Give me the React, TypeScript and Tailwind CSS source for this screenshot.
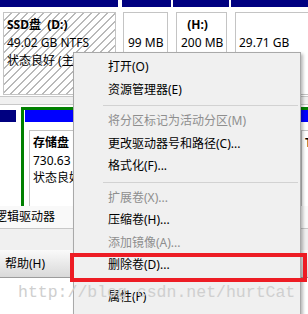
const menuItems: (string | { label: string; off?: boolean })[] = [
  { label: "打开(O)" },
  { label: "资源管理器(E)" },
  "sep",
  { label: "将分区标记为活动分区(M)", off: true },
  { label: "更改驱动器号和路径(C)..." },
  { label: "格式化(F)..." },
  "sep",
  { label: "扩展卷(X)...", off: true },
  { label: "压缩卷(H)..." },
  { label: "添加镜像(A)...", off: true },
  { label: "删除卷(D)..." },
  "sep",
  { label: "属性(P)" },
];

const ContextMenu = () => (
  <div className="absolute left-[73px] top-[52px] w-[228px] h-[280px] bg-[#f0f0f0] border border-[#a9a9a9] shadow-[2px_2px_3px_rgba(0,0,0,0.28)] pt-[3px]">
    {menuItems.map((item, i) =>
      item === "sep" ? (
        <div key={i} className="h-[9px] flex items-center pl-[29px] pr-[2px]">
          <div className="h-px w-full bg-[#d2d2d2]" />
        </div>
      ) : (
        <div
          key={i}
          className={`h-[22.5px] flex items-center pl-[34px] text-[12px] whitespace-nowrap ${
            item.off ? "text-[#8e8e8e]" : "text-black"
          }`}
        >
          {item.label}
        </div>
      )
    )}
  </div>
);

const Part = ({ lines, bold, className }: { lines: string[]; bold?: string; className?: string }) => (
  <div className={`h-[83px] border border-[#c4c4c4] pt-[3px] overflow-hidden leading-[18px] text-[12px] whitespace-pre ${className ?? ""}`}>
    <div className="font-bold h-[18px]">{bold}</div>
    {lines.map((l, i) => (
      <div key={i}>{l}</div>
    ))}
  </div>
);

export default function App() {
  return (
    <div className="relative w-[308px] h-[314px] overflow-hidden bg-white text-black font-['Noto_Sans','Noto_Sans_CJK_SC',sans-serif]">
      {/* disk 0 */}
      <div className="flex h-[96px] bg-white">
        <div className="w-[118px] shrink-0">
          <div className="h-[7px] bg-[#000080]" />
          <div className="pt-[5px] pl-[3px] pr-[2px]">
            <Part
              bold="SSD盘  (D:)"
              lines={["49.02 GB NTFS", "状态良好 (主分区)"]}
              className="pl-[3px] bg-[repeating-linear-gradient(135deg,#ffffff_0px,#ffffff_4.6px,#b9b9b9_4.6px,#b9b9b9_5.66px)]"
            />
          </div>
        </div>
        <div className="w-[4px] shrink-0" />
        <div className="w-[49px] shrink-0">
          <div className="h-[7px] bg-[#000080]" />
          <div className="pt-[5px] pl-[1px] pr-[3px]">
            <Part lines={["99 MB"]} className="pl-[4px] pr-[4px]" />
          </div>
        </div>
        <div className="w-[2px] shrink-0" />
        <div className="w-[56px] shrink-0">
          <div className="h-[7px] bg-[#000080]" />
          <div className="pt-[5px] pl-[3px] pr-[2px]">
            <Part bold="  (H:)" lines={["200 MB"]} className="pl-[4px]" />
          </div>
        </div>
        <div className="w-[2px] shrink-0" />
        <div className="w-[90px] shrink-0">
          <div className="h-[7px] bg-[#000080]" />
          <div className="pt-[5px] pl-[4px]">
            <Part lines={["29.71 GB"]} className="pl-[3px]" />
          </div>
        </div>
      </div>

      <div className="h-[8px] bg-[#f0f0f0] border-t border-[#c8c8c8]" />

      {/* disk 1 */}
      <div className="flex items-start h-[102px] overflow-hidden border-t border-[#c8c8c8] bg-white">
        <div className="w-[16px] shrink-0 pt-[5px]">
          <div className="h-[12px] bg-[#000080]" />
        </div>
        <div className="w-[5px] shrink-0" />
        <div className="mt-[2px] w-[320px] shrink-0 h-[110px] border-[3px] border-[#008000] flex gap-[2px]">
          <div className="ml-[1px] w-[270px] shrink-0">
            <div className="h-[12px] bg-[#0000ff]" />
            <div className="pt-[8px] pl-[4px]">
              <div className="border border-[#c4c4c4] h-[80px] pl-[3px] pt-[3px] leading-[17.5px] text-[12px] whitespace-pre overflow-hidden">
                <div className="font-bold">存储盘</div>
                <div>730.63 GB NTFS</div>
                <div>状态良好 (逻辑驱动器)</div>
              </div>
            </div>
          </div>
          <div className="w-[40px] shrink-0">
            <div className="h-[12px] bg-[#0000ff]" />
            <div className="pt-[8px] pl-[4px]">
              <div className="border border-[#c4c4c4] h-[80px] pl-[3px] pt-[3px] leading-[17.5px] text-[12px] whitespace-pre overflow-hidden">
                <div className="font-bold">T</div>
              </div>
            </div>
          </div>
        </div>
      </div>

      {/* legend */}
      <div className="h-[23px] flex items-center bg-[#f9f9f9] border-b border-[#c8c8c8] text-[12px] whitespace-nowrap">
        <span className="-ml-[5px]">逻辑驱动器</span>
      </div>
      <div className="h-[21px] bg-[#f0f0f0]" />
      <div className="h-[28px] flex items-center pl-[5px] bg-gradient-to-b from-[#fafafa] to-[#d9d9d9] border-b border-[#9c9c9c] text-[12px]">
        帮助(H)
      </div>

      <ContextMenu />

      <div className="absolute left-[70px] top-[253px] w-[237px] h-[29px] border-4 border-[#ed1c24]" />

      <div className="absolute left-[18px] top-[283px] text-[16.5px] leading-[20px] text-[#cfcfcf] font-['Liberation_Mono',monospace] whitespace-nowrap">
        http://blog.csdn.net/hurtCat
      </div>
    </div>
  );
}
